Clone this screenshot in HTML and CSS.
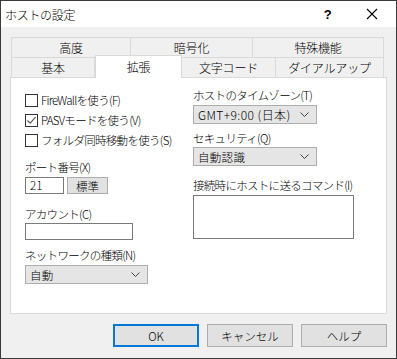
FILE: index.html
```html
<!DOCTYPE html>
<html lang="ja">

<head>
  <meta charset="UTF-8" />
  <title>ホストの設定</title>
  <link rel="stylesheet" href="styles.css">
</head>

<body>
  <div class="window">
    <div class="titlebar">
      <span class="title">ホストの設定</span>
      <span class="help-mark">?</span>
      <svg class="close" width="12" height="12" viewBox="0 0 12 12">
        <path d="M1 1 L11 11 M11 1 L1 11" stroke="#000" stroke-width="1.1" fill="none" />
      </svg>
    </div>

    <div class="content">
      <div class="tabs">
        <div class="tab-row back">
          <div class="tab t-high">高度</div>
          <div class="tab t-crypt">暗号化</div>
          <div class="tab t-special">特殊機能</div>
        </div>
        <div class="tab-row front">
          <div class="tab t-basic">基本</div>
          <div class="tab t-ext active">拡張</div>
          <div class="tab t-char">文字コード</div>
          <div class="tab t-dial">ダイアルアップ</div>
        </div>
      </div>

      <div class="panel">
        <div class="col left">
          <label class="check"><span class="box"></span>FireWallを使う(F)</label>
          <label class="check"><span class="box">
              <svg width="11" height="11" viewBox="0 0 11 11">
                <path d="M1.5 5.5 L4.2 8.2 L9.5 2.2" stroke="#555" stroke-width="1.1" fill="none" />
              </svg>
            </span>PASVモードを使う(V)</label>
          <label class="check"><span class="box"></span>フォルダ同時移動を使う(S)</label>

          <div class="field-label port-label">ポート番号(X)</div>
          <div class="port-row">
            <div class="input port">21</div>
            <div class="btn small">標準</div>
          </div>

          <div class="field-label account-label">アカウント(C)</div>
          <div class="input account"></div>

          <div class="field-label net-label">ネットワークの種類(N)</div>
          <div class="select net">
            <span>自動</span>
            <svg width="9" height="5" viewBox="0 0 9 5">
              <path d="M0.5 0.5 L4.5 4.5 L8.5 0.5" stroke="#444" stroke-width="1" fill="none" />
            </svg>
          </div>
        </div>

        <div class="col right">
          <div class="field-label">ホストのタイムゾーン(T)</div>
          <div class="select tz">
            <span>GMT+9:00 (日本)</span>
            <svg width="9" height="5" viewBox="0 0 9 5">
              <path d="M0.5 0.5 L4.5 4.5 L8.5 0.5" stroke="#444" stroke-width="1" fill="none" />
            </svg>
          </div>

          <div class="field-label sec-label">セキュリティ(Q)</div>
          <div class="select sec">
            <span>自動認識</span>
            <svg width="9" height="5" viewBox="0 0 9 5">
              <path d="M0.5 0.5 L4.5 4.5 L8.5 0.5" stroke="#444" stroke-width="1" fill="none" />
            </svg>
          </div>

          <div class="field-label cmd-label">接続時にホストに送るコマンド(I)</div>
          <div class="textarea"></div>
        </div>
      </div>

      <div class="buttons">
        <div class="btn default">OK</div>
        <div class="btn">キャンセル</div>
        <div class="btn">ヘルプ</div>
      </div>
    </div>
  </div>
</body>

</html>
```

FILE: styles.css
```css
body {
  margin: 0;
  font-family: "Noto Sans CJK JP", "Noto Sans", sans-serif;
  font-size: 11.5px;
  font-weight: 300;
  letter-spacing: -0.7px;
  color: #000;
}

.window {
  width: 397px;
  height: 359px;
  box-sizing: border-box;
  border: 1px solid #3a3a3a;
  background-color: #f0f0f0;
}

/* title bar */
.titlebar {
  height: 26px;
  background-color: #fff;
  display: flex;
  align-items: center;
  padding-left: 4px;
}

.title {
  font-size: 12px;
  letter-spacing: -0.3px;
  flex: 1;
}

.help-mark {
  font-family: "Liberation Sans", sans-serif;
  font-size: 13px;
  font-weight: bold;
  margin-right: 35px;
}

.close {
  margin-right: 18px;
}

.content {
  padding: 10px 9px 0 9px;
}

/* tabs */
.tabs {
  padding-left: 1px;
  position: relative;
  z-index: 1;
  font-size: 12px;
  letter-spacing: -0.2px;
}

.tab-row {
  display: flex;
  height: 20px;
}

.tab {
  box-sizing: border-box;
  border: 1px solid #d9d9d9;
  border-bottom: none;
  background-color: #f0f0f0;
  text-align: center;
  line-height: 19px;
}

.tab + .tab {
  border-left: none;
}

.t-high { width: 120px; }
.t-crypt { width: 122px; }
.t-special { width: 131px; }

.t-basic { width: 84px; }
.t-ext { width: 87px; }
.t-char { width: 94px; }
.t-dial { width: 108px; }

.tab.active {
  background-color: #fff;
  border: 1px solid #d9d9d9;
  border-bottom: none;
  margin-top: -2px;
  height: 23px;
  line-height: 22px;
}

.tab.active + .tab {
  border-left: none;
}

/* panel */
.panel {
  height: 237px;
  box-sizing: border-box;
  border: 1px solid #d9d9d9;
  background-color: #fff;
  display: flex;
}

.col.left {
  width: 168px;
  padding: 12px 0 0 14px;
  box-sizing: border-box;
}

.col.right {
  flex: 1;
  padding: 8px 0 0 14px;
}

.check {
  display: flex;
  align-items: center;
  height: 20px;
  white-space: nowrap;
}

.box {
  flex-shrink: 0;
  width: 13px;
  height: 13px;
  box-sizing: border-box;
  border: 1px solid #333;
  background-color: #fff;
  margin-right: 3px;
  display: flex;
  align-items: center;
  justify-content: center;
}

.field-label {
  height: 18px;
  line-height: 18px;
  white-space: nowrap;
}

.port-label {
  margin-top: 8px;
}

.port-row {
  display: flex;
  gap: 3px;
  margin-top: 1px;
}

.input {
  box-sizing: border-box;
  height: 17px;
  border: 1px solid #7a7a7a;
  background-color: #fff;
  line-height: 15px;
  padding-left: 4px;
  letter-spacing: 0;
}

.port {
  width: 39px;
}

.account-label {
  margin-top: 11px;
}

.account {
  width: 108px;
}

.net-label {
  margin-top: 6px;
}

.select {
  box-sizing: border-box;
  height: 19px;
  border: 1px solid #adadad;
  background-color: #e5e5e5;
  display: flex;
  align-items: center;
  justify-content: space-between;
  padding: 0 7px 0 4px;
  margin-top: 1px;
  letter-spacing: 0.3px;
}

.net {
  width: 123px;
}

.tz,
.sec {
  width: 124px;
}

.tz {
  font-size: 12px;
  letter-spacing: 0.4px;
}

.sec-label {
  margin-top: 5px;
}

.sec {
  margin-top: 0;
}

.cmd-label {
  margin-top: 10px;
}

.textarea {
  width: 161px;
  height: 44px;
  box-sizing: border-box;
  border: 1px solid #7a7a7a;
  background-color: #fff;
  margin-top: 1px;
}

/* buttons */
.btn {
  box-sizing: border-box;
  border: 1px solid #adadad;
  background-color: #e1e1e1;
  text-align: center;
  display: flex;
  align-items: center;
  justify-content: center;
  letter-spacing: 0;
}

.btn.small {
  width: 41px;
  height: 17px;
}

.buttons {
  display: flex;
  justify-content: flex-end;
  gap: 8px;
  margin-top: 10px;
  padding-right: 0;
}

.buttons .btn {
  width: 86px;
  height: 23px;
}

.btn.default {
  border: 2px solid #0078d7;
}
```
